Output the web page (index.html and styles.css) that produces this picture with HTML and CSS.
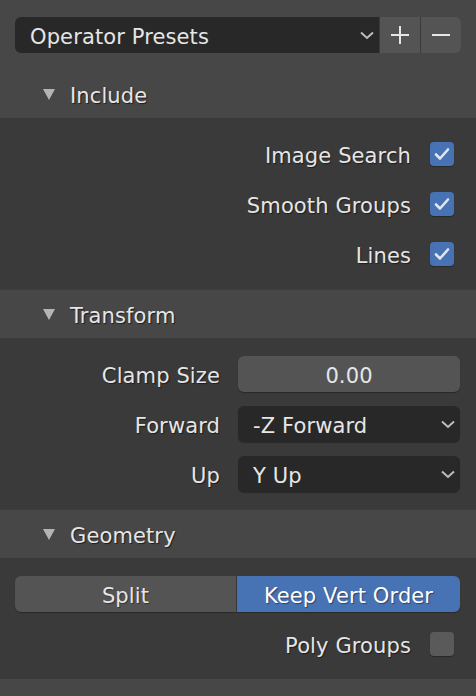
FILE: index.html
```html
<!DOCTYPE html>
<html>
<head>
<meta charset="utf-8">
<link rel="stylesheet" href="styles.css">
</head>
<body>
<div class="top">
  <div class="preset-row">
    <div class="dropdown dark preset-dd">
      <span class="t">Operator Presets</span>
      <svg class="chev" width="14" height="9" viewBox="0 0 14 9"><polyline points="1,1.5 7,7 13,1.5" fill="none" stroke="#bdbdbd" stroke-width="2"/></svg>
    </div>
    <div class="sq-btn"><svg width="20" height="20" viewBox="0 0 20 20"><path d="M10 1V19M1 10H19" stroke="#e6e6e6" stroke-width="2"/></svg></div>
    <div class="sq-btn last"><svg width="20" height="20" viewBox="0 0 20 20"><path d="M1 10H19" stroke="#e6e6e6" stroke-width="2"/></svg></div>
  </div>
</div>

<div class="panel-header"><span class="tri"></span><span class="t">Include</span></div>
<div class="panel-body">
  <div class="check-row"><span class="t">Image Search</span><span class="cb on"><svg width="24" height="24" viewBox="0 0 24 24"><polyline points="6,12.5 10,16.5 18,7.5" fill="none" stroke="#dfe6f2" stroke-width="2.6" stroke-linecap="round" stroke-linejoin="round"/></svg></span></div>
  <div class="check-row"><span class="t">Smooth Groups</span><span class="cb on"><svg width="24" height="24" viewBox="0 0 24 24"><polyline points="6,12.5 10,16.5 18,7.5" fill="none" stroke="#dfe6f2" stroke-width="2.6" stroke-linecap="round" stroke-linejoin="round"/></svg></span></div>
  <div class="check-row"><span class="t">Lines</span><span class="cb on"><svg width="24" height="24" viewBox="0 0 24 24"><polyline points="6,12.5 10,16.5 18,7.5" fill="none" stroke="#dfe6f2" stroke-width="2.6" stroke-linecap="round" stroke-linejoin="round"/></svg></span></div>
</div>

<div class="panel-header"><span class="tri"></span><span class="t">Transform</span></div>
<div class="panel-body">
  <div class="prop-row"><span class="lbl t">Clamp Size</span><div class="field num"><span class="t">0.00</span></div></div>
  <div class="prop-row"><span class="lbl t">Forward</span><div class="field dark dropdown"><span class="t">-Z Forward</span><svg class="chev" width="14" height="9" viewBox="0 0 14 9"><polyline points="1,1.5 7,7 13,1.5" fill="none" stroke="#bdbdbd" stroke-width="2"/></svg></div></div>
  <div class="prop-row"><span class="lbl t">Up</span><div class="field dark dropdown"><span class="t">Y Up</span><svg class="chev" width="14" height="9" viewBox="0 0 14 9"><polyline points="1,1.5 7,7 13,1.5" fill="none" stroke="#bdbdbd" stroke-width="2"/></svg></div></div>
</div>

<div class="panel-header"><span class="tri"></span><span class="t">Geometry</span></div>
<div class="panel-body">
  <div class="seg">
    <div class="seg-btn"><span class="t">Split</span></div>
    <div class="seg-btn active"><span class="t">Keep Vert Order</span></div>
  </div>
  <div class="check-row"><span class="t">Poly Groups</span><span class="cb"></span></div>
</div>
<div class="bottom"></div>
</body>
</html>
```
FILE: styles.css
```css
* { box-sizing: border-box; }
html, body { margin: 0; padding: 0; }
body {
  width: 476px;
  height: 696px;
  overflow: hidden;
  background: #3a3a3a;
  font-family: "DejaVu Sans", sans-serif;
  font-size: 21px;
  letter-spacing: 0.12px;
  color: #e6e6e6;
}
.t { padding-top: 4px; line-height: 24px; }
.top {
  background: #474747;
  padding: 17px 15px 17px 15px;
}
.preset-row {
  display: flex;
  height: 36px;
  gap: 1px;
}
.dropdown {
  display: flex;
  align-items: center;
  justify-content: space-between;
}
.dark { background: #282828; }
.preset-dd {
  flex: 1;
  border-radius: 6px 0 0 6px;
  padding: 0 5px 0 15px;
}
.chev { flex: none; }
.sq-btn {
  width: 40px;
  background: #545454;
  display: flex;
  align-items: center;
  justify-content: center;
  box-shadow: -1px 0 0 #3a3a3a;
}
.sq-btn.last { border-radius: 0 6px 6px 0; }

.panel-header {
  height: 49px;
  background: #474747;
  display: flex;
  align-items: center;
  padding-left: 43px;
  gap: 15px;
  text-shadow: 1px 1px 1px rgba(0,0,0,0.6);
  border-top: 1px solid #3d3d3d;
}
.top + .panel-header { border-top: none; height: 48px; }
.tri {
  width: 0; height: 0;
  border-left: 6.5px solid transparent;
  border-right: 6.5px solid transparent;
  border-top: 11px solid #b4b4b4;
}
.panel-body {
  padding: 18px 16px 17px 15px;
  display: flex;
  flex-direction: column;
  gap: 14px;
}
.check-row {
  height: 36px;
  display: flex;
  align-items: center;
  justify-content: flex-end;
  gap: 19px;
  padding-right: 6px;
  text-shadow: 1px 1px 1px rgba(0,0,0,0.5);
}
.cb {
  width: 24px; height: 24px;
  border-radius: 4px;
  background: #5a5a5a;
  box-shadow: 0 1px 1px rgba(0,0,0,0.3);
  display: block;
}
.cb svg { display: block; }
.cb.on { background: #4772b3; }
.prop-row {
  height: 36px;
  display: grid;
  grid-template-columns: 205px 1fr;
  gap: 18px;
  align-items: center;
}
.lbl { text-align: right; text-shadow: 1px 1px 1px rgba(0,0,0,0.5); }
.field {
  height: 36px;
  border-radius: 6px;
  box-shadow: 0 1px 1px rgba(0,0,0,0.3);
}
.field.num {
  background: #545454;
  display: flex;
  align-items: center;
  justify-content: center;
}
.field.dropdown { padding: 0 5px 0 15px; }
.seg {
  display: flex;
  height: 36px;
  gap: 1px;
}
.seg-btn {
  flex: 1;
  display: flex;
  align-items: center;
  justify-content: center;
  background: #545454;
  text-shadow: 1px 1px 1px rgba(0,0,0,0.4);
  box-shadow: 0 1px 1px rgba(0,0,0,0.3);
}
.seg-btn:first-child { border-radius: 6px 0 0 6px; flex: 221; }
.seg-btn.active { background: #4772b3; color: #fff; border-radius: 0 6px 6px 0; flex: 223; }
.bottom {
  height: 20px;
  background: #474747;
}
```
